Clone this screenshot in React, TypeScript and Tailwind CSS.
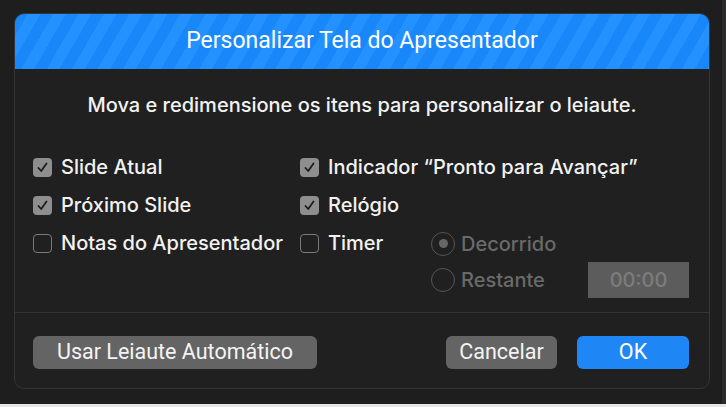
import React from "react";

const body = { fontFamily: 'Inter, "Noto Sans", sans-serif' };
const cond = { fontFamily: 'Roboto, "Liberation Sans", sans-serif' };

function Check({ checked }: { checked: boolean }) {
  return checked ? (
    <div className="w-[19px] h-[19px] rounded-[4px] bg-[#8e8e8e] flex items-center justify-center shrink-0">
      <svg width="13" height="13" viewBox="0 0 13 13">
        <path d="M2.5 7 L5.2 10 L10.5 2.5" fill="none" stroke="#1c1c1c" strokeWidth="1.8" strokeLinecap="round" strokeLinejoin="round" />
      </svg>
    </div>
  ) : (
    <div className="w-[19px] h-[19px] rounded-[4px] border-[1.5px] border-[#7a7a7a] shrink-0" />
  );
}

function CheckRow({ checked, label }: { checked: boolean; label: string }) {
  return (
    <div className="h-[38px] flex items-center gap-[9px]">
      <Check checked={checked} />
      <span className="text-[20px] font-medium text-[#f2f2f2] whitespace-nowrap">{label}</span>
    </div>
  );
}

function Radio({ selected, label }: { selected: boolean; label: string }) {
  return (
    <div className="flex items-center gap-[6px]">
      <div className="w-[24px] h-[24px] rounded-full border-[1.5px] border-[#565656] flex items-center justify-center">
        {selected && <div className="w-[9px] h-[9px] rounded-full bg-[#666]" />}
      </div>
      <span className="text-[20px] font-medium text-[#6a6a6a]">{label}</span>
    </div>
  );
}

export default function App() {
  return (
    <div className="w-[726px] h-[407px] bg-[#1e1e1e] flex flex-col" style={body}>
      <div className="flex-1 flex">
        <div className="flex-1 pl-[14px] pt-[13px]">
          <div className="w-[696px] h-[376px] rounded-[10px] border border-[#353535] bg-[#202020] overflow-hidden flex flex-col">
            <div
              className="h-[55px] shrink-0 flex items-center justify-center text-[23px] text-white bg-[image:repeating-linear-gradient(120deg,#1787fa_0px,#1787fa_11px,#2391ff_11px,#2391ff_22px)]"
              style={cond}
            >
              Personalizar Tela do Apresentador
            </div>
            <div className="mt-[26px] h-[20px] flex items-center justify-center text-[20px] font-medium text-[#f2f2f2]">
              Mova e redimensione os itens para personalizar o leiaute.
            </div>
            <div className="mt-[33px] pl-[18px] pr-[20px] flex h-[164px]">
              <div className="w-[267px] flex flex-col">
                <CheckRow checked label="Slide Atual" />
                <CheckRow checked label="Próximo Slide" />
                <CheckRow checked={false} label="Notas do Apresentador" />
              </div>
              <div className="flex-1 flex flex-col">
                <CheckRow checked label="Indicador “Pronto para Avançar”" />
                <CheckRow checked label="Relógio" />
                <div className="flex">
                  <div className="w-[131px]">
                    <CheckRow checked={false} label="Timer" />
                  </div>
                  <div className="flex-1 flex flex-col">
                    <div className="h-[38px] pt-[1px] flex items-center">
                      <Radio selected label="Decorrido" />
                    </div>
                    <div className="flex items-center justify-between">
                      <Radio selected={false} label="Restante" />
                      <div className="w-[101px] h-[36px] bg-[#5c5c5c] flex items-center justify-center text-[20px] font-medium text-[#7c7c7c]">
                        00:00
                      </div>
                    </div>
                  </div>
                </div>
              </div>
            </div>
            <div className="h-px bg-[#343434]" />
            <div className="flex items-center pl-[18px] pr-[20px] mt-[23px]" style={cond}>
              <div className="w-[284px] h-[33px] rounded-[6px] bg-[#646464] flex items-center justify-center text-[21.5px] text-[#f4f4f4]">
                Usar Leiaute Automático
              </div>
              <div className="flex-1" />
              <div className="w-[111px] h-[33px] rounded-[6px] bg-[#646464] flex items-center justify-center text-[21.5px] text-[#f4f4f4]">
                Cancelar
              </div>
              <div className="w-[112px] h-[33px] ml-[20px] rounded-[6px] bg-[#1f86f6] flex items-center justify-center text-[21.5px] text-white">
                OK
              </div>
            </div>
          </div>
        </div>
        <div className="w-[4px] bg-[#2a2a2a]" />
      </div>
      <div className="h-[3px] bg-[#e6e6e6]" />
    </div>
  );
}
